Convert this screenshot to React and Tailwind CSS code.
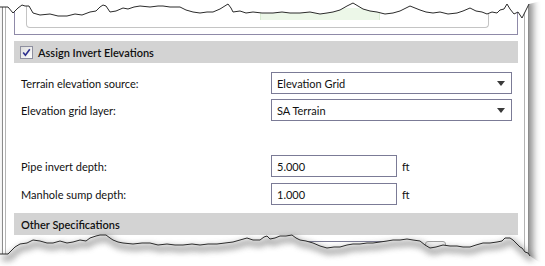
import React from "react";

const topEdge = [
  [0, 7], [8, 7], [13, 13], [18, 8], [22, 5], [25, 6], [29, 6], [33, 13], [40, 15], [50, 14],
  [58, 16], [67, 16], [75, 14], [82, 15], [90, 12], [96, 11], [100, 7], [103, 5], [106, 6],
  [110, 12], [116, 11], [123, 8], [128, 9], [134, 7], [140, 6], [150, 7], [158, 6], [163, 6],
  [170, 7], [180, 7], [186, 10], [193, 12], [200, 13], [207, 12], [213, 12], [220, 9],
  [228, 4], [231, 8], [233, 12], [240, 11], [246, 13], [253, 12], [262, 13], [273, 13],
  [282, 12], [290, 13], [300, 13], [310, 12], [320, 14], [327, 13], [333, 12], [340, 10],
  [347, 6], [353, 3], [358, 6], [363, 9], [370, 11], [377, 12], [385, 14], [393, 13],
  [400, 11], [406, 8], [410, 6], [415, 8], [420, 10], [426, 12], [433, 13], [440, 12],
  [448, 14], [457, 13], [463, 11], [470, 8], [476, 11], [482, 12], [487, 14], [492, 12],
  [497, 13], [500, 10], [504, 9], [507, 4], [510, 9], [514, 14], [518, 12], [522, 18],
  [525, 12], [528, 6], [529, 4],
];

const bottomEdge = [
  [0, 254], [8, 254], [12, 250], [15, 247], [20, 244], [27, 243], [33, 240], [40, 241],
  [47, 243], [53, 243], [60, 241], [67, 243], [73, 242], [80, 240], [86, 241], [90, 238],
  [96, 236], [100, 235], [106, 235], [110, 238], [113, 240], [118, 242], [123, 243],
  [133, 244], [142, 243], [150, 243], [158, 245], [167, 244], [175, 245], [183, 245],
  [192, 244], [200, 245], [208, 244], [217, 244], [225, 243], [233, 242], [240, 240],
  [247, 238], [253, 240], [260, 240], [264, 237], [267, 236], [270, 239], [275, 238],
  [280, 236], [286, 236], [292, 235], [296, 238], [300, 240], [306, 241], [313, 243],
  [320, 246], [327, 248], [334, 247], [340, 247], [347, 245], [353, 244], [360, 244],
  [367, 243], [373, 243], [380, 242], [387, 241], [393, 240], [400, 240], [407, 239],
  [413, 240], [420, 241], [425, 245], [430, 248], [436, 247], [443, 245], [450, 246],
  [457, 246], [463, 247], [470, 247], [476, 245], [483, 243], [490, 243], [497, 242],
  [502, 241], [505, 238], [510, 238], [513, 240], [516, 243], [520, 247], [522, 248],
  [525, 252], [528, 253], [530, 256],
];

function pts(list) {
  return list.map(([x, y]) => `${x},${y}`).join(" ");
}

function TornEdges() {
  const top = pts(topEdge);
  const bottom = pts(bottomEdge);
  return (
    <svg
      className="absolute left-0 top-0 pointer-events-none"
      width="545"
      height="266"
      viewBox="0 0 545 266"
    >
      <defs>
        <filter id="tornShadow" x="-10%" y="-50%" width="120%" height="200%">
          <feGaussianBlur stdDeviation="3" />
        </filter>
      </defs>
      <polygon points={`0,0 ${top} 545,0`} fill="#ffffff" />
      <polyline points={top} fill="none" stroke="#2b2b2b" strokeWidth="1" />
      <polygon points={`0,266 ${bottom} 545,266`} fill="#ffffff" />
      <polyline
        points={pts(bottomEdge.map(([x, y]) => [x + 2, y + 4]))}
        fill="none"
        stroke="#707070"
        strokeWidth="5"
        filter="url(#tornShadow)"
        opacity="0.7"
      />
      <polyline points={bottom} fill="none" stroke="#2b2b2b" strokeWidth="1" />
    </svg>
  );
}

function Checkbox() {
  return (
    <span className="w-[13px] h-[13px] border border-[#8e8f9f] bg-gradient-to-br from-[#dcdcdc] to-[#ffffff] flex items-center justify-center">
      <svg width="9" height="9" viewBox="0 0 9 9">
        <path d="M1.2 4.6 L3.4 7.2 L7.8 1.2" fill="none" stroke="#2d2f8f" strokeWidth="1.6" />
      </svg>
    </span>
  );
}

function Dropdown({ value }) {
  return (
    <div className="w-[241px] h-[22px] border border-[#7b7b96] bg-white flex items-center justify-between pl-[5px] pr-[6px]">
      <span>{value}</span>
      <svg width="8" height="5" viewBox="0 0 8 5">
        <path d="M0 0 H8 L4 5 Z" fill="#3a3a3a" />
      </svg>
    </div>
  );
}

function Row({ label, children, className }) {
  return (
    <div className={`flex items-center h-[22px] ${className}`}>
      <span className="w-[250px]">{label}</span>
      {children}
    </div>
  );
}

export default function App() {
  return (
    <div className="relative w-[545px] h-[266px] overflow-hidden bg-white text-[11px] leading-none text-[#111] font-['Lato',sans-serif]">
      <div className="ml-[2px] w-[527px] h-full border-x border-[#8c8c8c] pl-[2px] pr-[3px] shadow-[4px_0_7px_rgba(0,0,0,0.45)]">
        <div className="h-full border-x border-[#b4b4b4] pl-[8px] pr-[6px] bg-white">
          {/* previous group, mostly torn away */}
          <div className="h-[35px] border-x border-b border-[#8f8aa8] pl-[11px]">
            <div className="w-[463px] h-[28px] border-x border-b border-[#c4c4c4] rounded-b-[4px] pt-[8px]">
              <div className="ml-[233px] w-[120px] h-[12px] bg-[#ecf7e8] border-x border-[#d9ecd3]" />
            </div>
          </div>

          <div className="mt-[6px] h-[22px] bg-[#d3d3d3] flex items-center pl-[6px] gap-[5px] font-semibold">
            <Checkbox />
            <span>Assign Invert Elevations</span>
          </div>

          <div className="pl-[7px]">
            <Row label="Terrain elevation source:" className="mt-[9px]">
              <Dropdown value="Elevation Grid" />
            </Row>
            <Row label="Elevation grid layer:" className="mt-[5px]">
              <Dropdown value="SA Terrain" />
            </Row>
            <Row label="Pipe invert depth:" className="mt-[34px]">
              <div className="w-[126px] h-[22px] border border-[#7b7b96] flex items-center pl-[5px]">5.000</div>
              <span className="ml-[5px]">ft</span>
            </Row>
            <Row label="Manhole sump depth:" className="mt-[6px]">
              <div className="w-[126px] h-[22px] border border-[#7b7b96] flex items-center pl-[5px]">1.000</div>
              <span className="ml-[5px]">ft</span>
            </Row>
          </div>

          <div className="mt-[8px] h-[22px] bg-[#d3d3d3] flex items-center pl-[7px] font-semibold">
            Other Specifications
          </div>

          <div className="mt-[6px] flex items-start pl-[254px] gap-[6px]">
            <div className="w-[151px] h-[22px] border border-[#7b7b96]" />
            <div className="w-[21px] h-[18px] border border-[#a0a0a0] rounded-[3px] bg-[#f2f2f2]" />
          </div>
        </div>
      </div>
      <TornEdges />
    </div>
  );
}
